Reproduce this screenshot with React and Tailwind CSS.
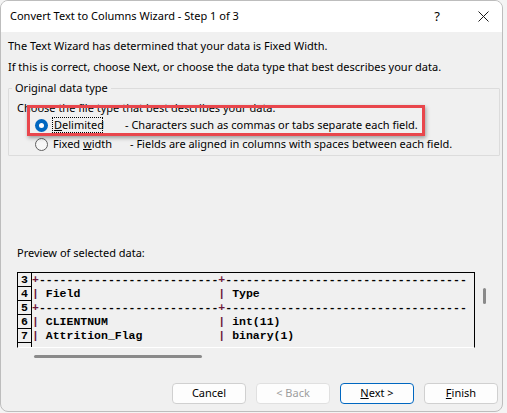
import { useState } from "react";

const ui = { fontFamily: '"Noto Sans", "Open Sans", sans-serif' };
const mono = { fontFamily: '"Liberation Mono", "Courier New", monospace' };

const rows = [
  { n: "3", kind: "sep" },
  { n: "4", kind: "row", a: "Field", b: "Type" },
  { n: "5", kind: "sep" },
  { n: "6", kind: "row", a: "CLIENTNUM", b: "int(11)" },
  { n: "7", kind: "row", a: "Attrition_Flag", b: "binary(1)" },
];

const PreviewLine = ({ row }) => {
  if (row.kind === "sep") {
    return (
      <div className="whitespace-pre">
        <span className="text-[#6e1a3c]">+</span>
        {"-".repeat(26)}
        <span className="text-[#6e1a3c]">+</span>
        {"-".repeat(35)}
      </div>
    );
  }
  return (
    <div className="whitespace-pre">
      <span className="text-[#6e1a3c]">|</span>
      {" " + row.a.padEnd(25, " ")}
      <span className="text-[#6e1a3c]">|</span>
      {" " + row.b}
    </div>
  );
};

const Button = ({ children, primary, disabled }) => (
  <div
    className={`w-[74px] h-[21px] rounded-[4px] flex items-center justify-center text-[11px] ${
      primary
        ? "border border-[#0067c0] bg-[#fdfdfd]"
        : "border border-[#d0d0d0] bg-[#fdfdfd]"
    } ${disabled ? "text-[#9d9d9d] bg-[#f5f5f5] border-[#e0e0e0]" : "text-black"}`}
  >
    {children}
  </div>
);

const Radio = ({ checked }) =>
  checked ? (
    <div className="w-[13px] h-[13px] rounded-full bg-[#0067c0] flex items-center justify-center shrink-0">
      <div className="w-[5px] h-[5px] rounded-full bg-white" />
    </div>
  ) : (
    <div className="w-[13px] h-[13px] rounded-full border border-[#5f5f5f] bg-[#f7f7f7] shrink-0" />
  );

export default function App() {
  const [type, setType] = useState("delimited");

  return (
    <div className="w-[507px] h-[413px] bg-[#f4f4f4] overflow-hidden" style={ui}>
      <div className="w-[503px] h-[412px] rounded-lg border border-[#bdbdbd] bg-[#f0f0f0] overflow-hidden flex flex-col">
        {/* title bar */}
        <div className="h-[31px] bg-white flex items-center pl-[9px] shrink-0">
          <span className="text-[11px] text-black">Convert Text to Columns Wizard - Step 1 of 3</span>
          <span className="ml-auto text-[13px] text-black w-[10px] text-center mr-[36px]">?</span>
          <svg width="11" height="11" viewBox="0 0 11 11" className="mr-[13px]">
            <path d="M0.5 0.5 L10.5 10.5 M10.5 0.5 L0.5 10.5" stroke="#1a1a1a" strokeWidth="1" />
          </svg>
        </div>

        <div className="px-[7px] text-[11px] text-black">
          <div className="mt-[4px] h-[20px] leading-[20px]">The Text Wizard has determined that your data is Fixed Width.</div>
          <div className="mt-[1px] h-[20px] leading-[20px]">If this is correct, choose Next, or choose the data type that best describes your data.</div>

          {/* group box */}
          <div className="relative mt-[3px]">
            <fieldset className="border border-[#dcdcdc] w-[492px] pb-[2px] rounded-[1px]">
              <legend className="ml-[3px] px-[3px] leading-[16px]">Original data type</legend>
              <div className="pl-[8px] pt-[4px] leading-[16px]">Choose the file type that best describes your data.</div>
              <div className="flex items-center h-[18px] pl-[26px] cursor-pointer" onClick={() => setType("delimited")}>
                <Radio checked={type === "delimited"} />
                <span className="ml-[4px] border border-dotted border-black leading-[14px] px-[1px] w-[51px] shrink-0">
                  <u>D</u>elimited
                </span>
                <span className="ml-[22px]">- Characters such as commas or tabs separate each field.</span>
              </div>
              <div className="flex items-center h-[18px] mt-[1px] pl-[26px] cursor-pointer" onClick={() => setType("fixed")}>
                <Radio checked={type === "fixed"} />
                <span className="ml-[5px] w-[77px] shrink-0">
                  Fixed <u>w</u>idth
                </span>
                <span>- Fields are aligned in columns with spaces between each field.</span>
              </div>
            </fieldset>
            {/* red highlight annotation */}
            <div className="absolute left-[19px] top-[25px] w-[398px] h-[31px] border-[3px] border-[#e9464c] shadow-[1px_2px_4px_rgba(0,0,0,0.35)] pointer-events-none" />
          </div>

          <div className="mt-[89px] pl-[9px] leading-[16px]">Preview of selected data:</div>

          {/* preview */}
          <div className="flex mt-[11px] ml-[9px]">
            <div className="w-[458px] h-[76px] border-t border-x border-black overflow-hidden border-b border-b-white text-[11.5px] font-bold text-black leading-[14px]" style={mono}>
              {rows.map((r) => (
                <div key={r.n} className="flex h-[14px]">
                  <div className="w-[14px] shrink-0 border-r border-b border-black text-center leading-[13px]">{r.n}</div>
                  <PreviewLine row={r} />
                </div>
              ))}
              <div className="flex h-[14px]">
                <div className="w-[14px] shrink-0 border-r border-black" />
              </div>
            </div>
            <div className="ml-[8px] mt-[16px] w-[3px] h-[16px] bg-[#8a8a8a] rounded-full" />
          </div>
          <div className="ml-[26px] mt-[7px] w-[168px] h-[3px] bg-[#8a8a8a] rounded-full" />

          {/* buttons */}
          <div className="flex justify-end gap-[10px] mt-[25px] -mr-[3px]">
            <Button>Cancel</Button>
            <Button disabled>&lt; Back</Button>
            <Button primary>
              <u>N</u>ext &gt;
            </Button>
            <Button>
              <u>F</u>inish
            </Button>
          </div>
        </div>
      </div>
    </div>
  );
}
